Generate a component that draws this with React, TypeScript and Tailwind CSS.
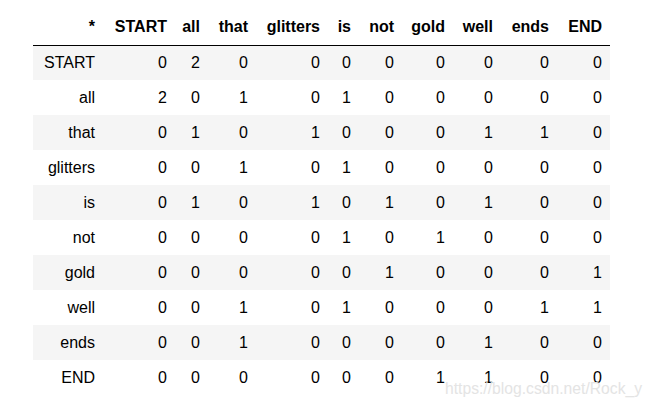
const columns = [
  { label: "*", w: "w-[70px]" },
  { label: "START", w: "w-[72px]" },
  { label: "all", w: "w-[33px]" },
  { label: "that", w: "w-[48px]" },
  { label: "glitters", w: "w-[72px]" },
  { label: "is", w: "w-[31px]" },
  { label: "not", w: "w-[43px]" },
  { label: "gold", w: "w-[51px]" },
  { label: "well", w: "w-[48px]" },
  { label: "ends", w: "w-[56px]" },
  { label: "END", w: "w-[53px]" },
];

const rows: [string, number[]][] = [
  ["START", [0, 2, 0, 0, 0, 0, 0, 0, 0, 0]],
  ["all", [2, 0, 1, 0, 1, 0, 0, 0, 0, 0]],
  ["that", [0, 1, 0, 1, 0, 0, 0, 1, 1, 0]],
  ["glitters", [0, 0, 1, 0, 1, 0, 0, 0, 0, 0]],
  ["is", [0, 1, 0, 1, 0, 1, 0, 1, 0, 0]],
  ["not", [0, 0, 0, 0, 1, 0, 1, 0, 0, 0]],
  ["gold", [0, 0, 0, 0, 0, 1, 0, 0, 0, 1]],
  ["well", [0, 0, 1, 0, 1, 0, 0, 0, 1, 1]],
  ["ends", [0, 0, 1, 0, 0, 0, 0, 1, 0, 0]],
  ["END", [0, 0, 0, 0, 0, 0, 1, 1, 0, 0]],
];

export default function App() {
  return (
    <div className="relative h-[408px] w-[652px] overflow-hidden bg-white font-['Liberation_Sans',Arial,sans-serif] text-[16px] text-black">
      <div className="pl-[33px] pt-[9px]">
        <table className="w-[577px] table-fixed border-collapse">
          <colgroup>
            {columns.map((c) => (
              <col key={c.label} className={c.w} />
            ))}
          </colgroup>
          <thead>
            <tr className="h-[36px] border-b border-black">
              {columns.map((c) => (
                <th key={c.label} className="p-0 pr-2 text-right align-middle font-bold">
                  {c.label}
                </th>
              ))}
            </tr>
          </thead>
          <tbody>
            {rows.map(([name, vals], i) => (
              <tr key={name} className={i % 2 === 0 ? "h-[35px] bg-[#f5f5f5]" : "h-[35px]"}>
                <td className="p-0 pr-2 text-right align-middle">{name}</td>
                {vals.map((v, j) => (
                  <td key={j} className="p-0 pr-2 text-right align-middle">
                    {v}
                  </td>
                ))}
              </tr>
            ))}
          </tbody>
        </table>
      </div>
      <span className="absolute left-[445px] top-[381px] text-[15.7px] leading-none text-[#e4e4e4]">
        https://blog.csdn.net/Rock_y
      </span>
    </div>
  );
}
